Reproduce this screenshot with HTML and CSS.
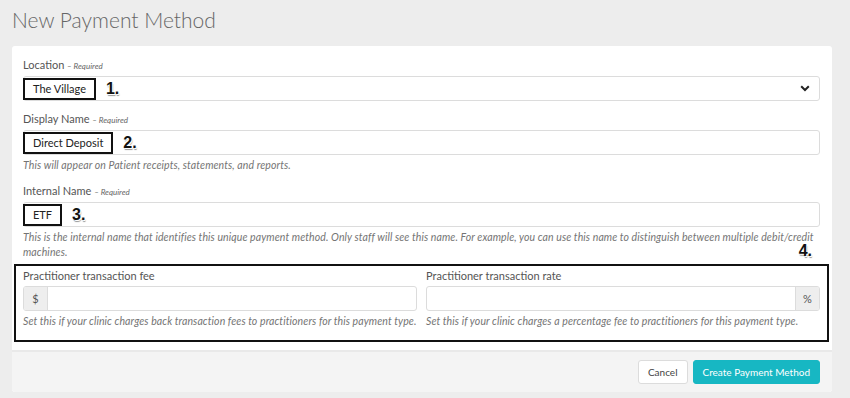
FILE: index.html
```html
<!DOCTYPE html>
<html lang="en">
<head>
    <meta charset="UTF-8">
    <title>New Payment Method</title>
    <link rel="stylesheet" href="styles.css">
</head>
<body>
    <h1 class="page-title">New Payment Method</h1>

    <div class="card">
        <div class="card-body">
            <div class="field">
                <label class="field-label">Location <em>– Required</em></label>
                <div class="input select">
                    <span class="tag">The Village</span>
                    <span class="step">1.</span>
                    <svg class="chevron" width="10" height="7" viewBox="0 0 10 7">
                        <path d="M1.2 1.3 L5 5 L8.8 1.3" fill="none" stroke="#222" stroke-width="2"/>
                    </svg>
                </div>
            </div>

            <div class="field">
                <label class="field-label">Display Name <em>– Required</em></label>
                <div class="input">
                    <span class="tag">Direct Deposit</span>
                    <span class="step">2.</span>
                </div>
                <p class="help">This will appear on Patient receipts, statements, and reports.</p>
            </div>

            <div class="field field-internal">
                <label class="field-label">Internal Name <em>– Required</em></label>
                <div class="input">
                    <span class="tag">ETF</span>
                    <span class="step">3.</span>
                </div>
                <p class="help">This is the internal name that identifies this unique payment method. Only staff will see this name. For example, you can use this name to distinguish between multiple debit/credit machines.</p>
                <span class="step step-four">4.</span>
            </div>

            <div class="fee-box">
                <div class="fee-col">
                    <label class="field-label">Practitioner transaction fee</label>
                    <div class="input-group">
                        <span class="addon addon-left">$</span>
                        <span class="group-input"></span>
                    </div>
                    <p class="help">Set this if your clinic charges back transaction fees to practitioners for this payment type.</p>
                </div>
                <div class="fee-col">
                    <label class="field-label">Practitioner transaction rate</label>
                    <div class="input-group">
                        <span class="group-input"></span>
                        <span class="addon addon-right">%</span>
                    </div>
                    <p class="help">Set this if your clinic charges a percentage fee to practitioners for this payment type.</p>
                </div>
            </div>
        </div>

        <div class="card-footer">
            <button class="btn btn-default">Cancel</button>
            <button class="btn btn-primary">Create Payment Method</button>
        </div>
    </div>
</body>
</html>
```

FILE: styles.css
```css
:root {
    --page-bg: #ededed;
    --border-color: #dcdcdc;
    --label-color: #555;
    --help-color: #747474;
    --teal: #17b7c3;
}

* {
    margin: 0;
    padding: 0;
    box-sizing: border-box;
}

body {
    font-family: Lato, "Open Sans", Arial, sans-serif;
    background: var(--page-bg);
    color: #333;
    width: 850px;
    height: 398px;
    overflow: hidden;
}

.page-title {
    font-size: 21px;
    font-weight: 300;
    color: #666;
    padding: 7px 0 0 12px;
    height: 46px;
    line-height: 26px;
}

.card {
    margin: 0 18px 0 12px;
    background: white;
    border-radius: 3px;
    overflow: hidden;
}

.card-body {
    padding: 12px 12px 8px 11px;
}

.field {
    margin-bottom: 11px;
}

.field-internal {
    position: relative;
    margin-bottom: 4px;
}

.field-label {
    display: block;
    font-size: 11px;
    line-height: 14px;
    color: var(--label-color);
    margin-bottom: 3px;
}

.field-label em {
    font-size: 8px;
    color: #666;
}

.input {
    height: 25px;
    border: 1px solid var(--border-color);
    border-radius: 3px;
    display: flex;
    align-items: center;
}

.select {
    padding-right: 9px;
}

.chevron {
    margin-left: auto;
}

.tag {
    height: 22px;
    margin-left: -1px;
    border: 2px solid #111;
    padding: 0 8px;
    display: flex;
    align-items: center;
    font-size: 11px;
    color: #222;
}

.step {
    margin-left: 10px;
    font-family: "Liberation Sans", Arial, sans-serif;
    font-weight: bold;
    font-size: 16px;
    color: #111;
    text-shadow: 1px 1px 0 white, -1px -1px 0 white, 1px 2px 1px #999;
}

.help {
    font-size: 10.5px;
    font-style: italic;
    color: var(--help-color);
    line-height: 15px;
    margin-top: 3px;
    letter-spacing: 0.1px;
}

.step-four {
    position: absolute;
    right: 8px;
    bottom: 0;
}

.fee-box {
    margin-left: -9px;
    margin-right: -9px;
    border: 2px solid #111;
    padding: 3px 7px 11px 7px;
    display: flex;
    gap: 9px;
}

.fee-col {
    flex: 1;
}

.input-group {
    display: flex;
    height: 25px;
    border: 1px solid var(--border-color);
    border-radius: 3px;
    overflow: hidden;
}

.group-input {
    flex: 1;
}

.addon {
    width: 24px;
    background: #eee;
    display: flex;
    align-items: center;
    justify-content: center;
    font-size: 11px;
    color: #555;
}

.addon-left {
    border-right: 1px solid var(--border-color);
}

.addon-right {
    border-left: 1px solid var(--border-color);
}

.card-footer {
    background: #f4f4f4;
    border-top: 2px solid #e9e9e9;
    padding: 8px 12px 8px 0;
    display: flex;
    justify-content: flex-end;
    gap: 5px;
}

.btn {
    font-family: Lato, "Open Sans", Arial, sans-serif;
    font-size: 10px;
    height: 24px;
    border-radius: 3px;
    padding: 0 9px;
    cursor: pointer;
}

.btn-default {
    background: white;
    color: #444;
    border: 1px solid var(--border-color);
}

.btn-primary {
    background: var(--teal);
    color: white;
    border: 1px solid var(--teal);
}
```
